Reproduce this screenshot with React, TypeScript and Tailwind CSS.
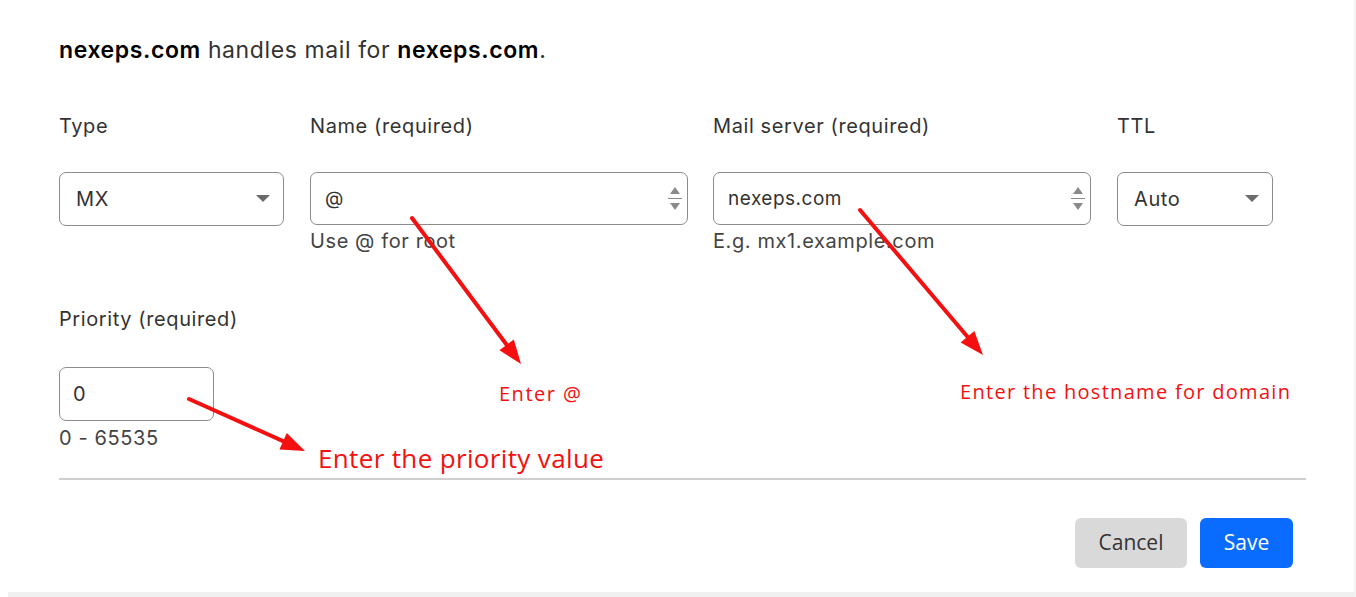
import React from "react";

const Caret = () => (
  <svg width="14" height="8" viewBox="0 0 14 8" className="shrink-0">
    <path d="M0 0 L14 0 L7 7 Z" fill="#6b6b6b" />
  </svg>
);

const Spinner = () => (
  <div className="flex flex-col items-center justify-center gap-[3px] w-[16px] h-full">
    <svg width="12" height="9" viewBox="0 0 12 9">
      <path d="M1 8 L6 1 L11 8 Z" fill="#8a8a8a" />
    </svg>
    <div className="w-[14px] h-px bg-[#8a8a8a]" />
    <svg width="12" height="9" viewBox="0 0 12 9">
      <path d="M1 1 L11 1 L6 8 Z" fill="#8a8a8a" />
    </svg>
  </div>
);

const Arrow = ({ x1, y1, x2, y2 }: { x1: number; y1: number; x2: number; y2: number }) => {
  const ang = Math.atan2(y2 - y1, x2 - x1);
  const len = 24;
  const wid = 9;
  const bx = x2 - Math.cos(ang) * len;
  const by = y2 - Math.sin(ang) * len;
  const px = -Math.sin(ang) * wid;
  const py = Math.cos(ang) * wid;
  return (
    <g>
      <line x1={x1} y1={y1} x2={bx} y2={by} stroke="#f41010" strokeWidth="4" strokeLinecap="round" />
      <path d={`M${x2} ${y2} L${bx + px} ${by + py} L${bx - px} ${by - py} Z`} fill="#f41010" />
    </g>
  );
};

export default function App() {
  return (
    <div className="relative w-[1356px] h-[597px] bg-white overflow-hidden font-['Inter',sans-serif] text-[#333]">
      <div className="pl-[59px] pt-[36px] pr-[50px]">
        <p className="text-[23px] text-[#333] leading-[28px] tracking-[0.6px]">
          <span className="font-semibold text-black">nexeps.com</span> handles mail for{" "}
          <span className="font-semibold text-black">nexeps.com</span>.
        </p>

        <div className="flex mt-[48px] text-[20px] tracking-[0.6px]">
          <div className="w-[225px] mr-[26px]">
            <div className="leading-[28px]">Type</div>
            <div className="mt-[32px] h-[54px] border border-[#8c8c8c] rounded-[7px] flex items-center justify-between pl-[16px] pr-[13px]">
              <span className="text-[#333]">MX</span>
              <Caret />
            </div>
          </div>

          <div className="w-[378px] mr-[25px]">
            <div className="leading-[28px]">Name (required)</div>
            <div className="mt-[32px] h-[53px] border border-[#8c8c8c] rounded-[7px] flex items-center justify-between pl-[14px] pr-[4px]">
              <span className="text-[19px] text-[#333] mt-[2px]">@</span>
              <Spinner />
            </div>
            <div className="leading-[26px] mt-[3px] text-[#444]">Use @ for root</div>
          </div>

          <div className="w-[378px] mr-[26px]">
            <div className="leading-[28px]">Mail server (required)</div>
            <div className="mt-[32px] h-[53px] border border-[#8c8c8c] rounded-[7px] flex items-center justify-between pl-[14px] pr-[4px]">
              <span className="text-[19px] tracking-[0.5px] text-[#333] mt-[2px]">nexeps.com</span>
              <Spinner />
            </div>
            <div className="leading-[26px] mt-[3px] text-[#444]">E.g. mx1.example.com</div>
          </div>

          <div className="w-[156px]">
            <div className="leading-[28px]">TTL</div>
            <div className="mt-[32px] h-[54px] border border-[#8c8c8c] rounded-[7px] flex items-center justify-between pl-[16px] pr-[13px]">
              <span className="text-[#333]">Auto</span>
              <Caret />
            </div>
          </div>
        </div>

        <div className="mt-[51px] w-[155px] text-[20px] tracking-[0.6px]">
          <div className="leading-[28px] whitespace-nowrap">Priority (required)</div>
          <div className="mt-[34px] h-[54px] border border-[#8c8c8c] rounded-[7px] flex items-center pl-[13px]">
            <span className="text-[#333]">0</span>
          </div>
          <div className="leading-[26px] mt-[4px] text-[#444]">0 - 65535</div>
        </div>

        <div className="mt-[27px] w-[1247px] h-[2px] bg-[#cfcfcf]" />

        <div className="flex justify-end w-[1234px] mt-[38px] gap-[13px] font-['Open_Sans',sans-serif]">
          <button className="w-[112px] h-[50px] rounded-[6px] bg-[#d9d9d9] text-[21px] text-[#333]">Cancel</button>
          <button className="w-[93px] h-[50px] rounded-[6px] bg-[#0a6cff] text-[21px] text-white">Save</button>
        </div>
      </div>

      <div className="absolute left-[8px] right-0 bottom-0 h-[5px] bg-[#f0f0f0]" />
      <div className="absolute right-0 top-0 bottom-0 w-[2px] bg-[#f3f3f3]" />

      <svg className="absolute inset-0 pointer-events-none" width="1356" height="597">
        <Arrow x1={412} y1={218} x2={521} y2={364} />
        <Arrow x1={860} y1={210} x2={983} y2={355} />
        <Arrow x1={189} y1={399} x2={305} y2={451} />
      </svg>
      <div className="absolute left-[499px] top-[380px] text-[20px] leading-[28px] text-[#f41010] font-['Open_Sans',sans-serif] tracking-[1.5px]">Enter @</div>
      <div className="absolute left-[960px] top-[378px] text-[20px] leading-[28px] text-[#f41010] font-['Open_Sans',sans-serif] tracking-[1.3px]">Enter the hostname for domain</div>
      <div className="absolute left-[318px] top-[441px] text-[26px] leading-[34px] text-[#f41010] font-['Open_Sans',sans-serif] tracking-[0.35px]">Enter the priority value</div>
    </div>
  );
}
